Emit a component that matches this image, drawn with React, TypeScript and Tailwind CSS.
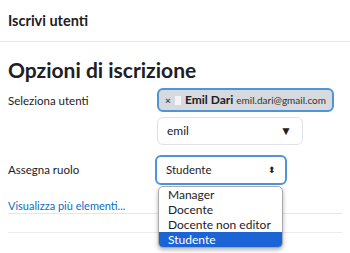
export default function App() {
  return (
    <div
      className="relative h-[253px] w-[350px] overflow-hidden bg-white text-[#1d2125]"
      style={{ fontFamily: 'Lato, "Open Sans", sans-serif' }}
    >
      <div className="flex h-[42px] items-center border-b border-[#e6e6e6] px-2">
        <h1 className="text-[14.5px] font-bold">Iscrivi utenti</h1>
      </div>

      <div className="px-2 pt-[14px]">
        <h2 className="text-[21px] leading-[28px] font-bold">Opzioni di iscrizione</h2>

        <div className="mt-[4px] flex">
          <div className="w-[149px] whitespace-nowrap pt-[4px] text-[11.5px]">Seleziona utenti</div>
          <div className="flex flex-col">
            <div className="flex h-[24px] w-[177px] items-center gap-[3px] whitespace-nowrap rounded-[6px] border-2 border-[#4f93d8] bg-[#d6d9dd] px-[6px]">
              <span className="text-[10px] font-bold text-[#444]">×</span>
              <span className="mx-[1px] h-[9px] w-[8px] bg-[#f4f4f4]" />
              <span className="text-[12px] font-bold">Emil Dari</span>
              <span className="text-[10px] text-[#333]">emil.dari@gmail.com</span>
            </div>
            <div className="mt-[5px] flex h-[28px] w-[146px] items-center justify-between rounded-[6px] border border-[#dee2e6] pl-[9px] pr-[10px] text-[12px]">
              <span>emil</span>
              <span className="text-[12px]">▼</span>
            </div>
          </div>
        </div>

        <div className="mt-[10px] flex items-center">
          <div className="w-[147px] whitespace-nowrap text-[11.5px]">Assegna ruolo</div>
          <div className="flex h-[30px] w-[132px] items-center justify-between rounded-[6px] border-2 border-[#4f93d8] pl-[9px] pr-[9px] text-[11.5px]">
            <span>Studente</span>
            <span className="text-[9px]">⬍</span>
          </div>
        </div>

        <div className="mt-[14px] border-b border-[#e6e6e6]">
          <a className="block whitespace-nowrap text-[11px] leading-[14px] text-[#0f6cbf]">Visualizza più elementi...</a>
        </div>
        <div className="mt-[18px] border-b border-[#ececec]" />
      </div>

      <ul className="absolute left-[158px] top-[186px] w-[125px] overflow-hidden whitespace-nowrap rounded-[5px] border border-[#aaa] bg-white text-[12px] leading-[15px] shadow-[0_2px_4px_rgba(0,0,0,0.3)]">
        <li className="px-[9px]">Manager</li>
        <li className="px-[9px]">Docente</li>
        <li className="px-[9px]">Docente non editor</li>
        <li className="bg-[#1b64d6] px-[9px] text-white">Studente</li>
      </ul>
    </div>
  );
}
